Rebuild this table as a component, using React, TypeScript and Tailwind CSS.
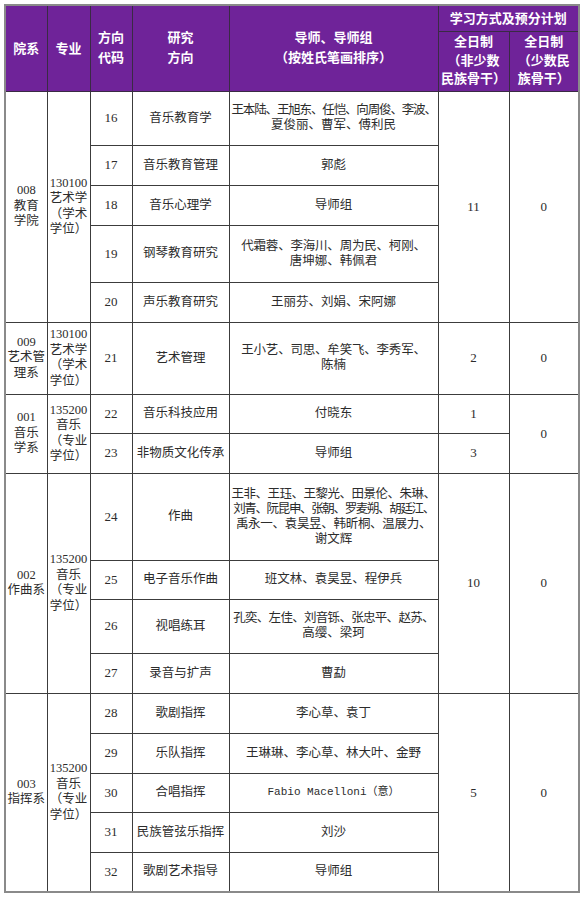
import React from "react";

type Line = { t: string; c?: string };
type Row = {
  code: string;
  dir: string;
  names: (string | Line)[];
  mono?: boolean;
  h: string;
};
type Group = {
  dept: string[];
  major: string[];
  rows: Row[];
  plan: { v: string; span: number }[];
  minority: { v: string; span: number }[];
};

const groups: Group[] = [
  {
    dept: ["008", "教育", "学院"],
    major: ["130100", "艺术学", "（学术", "学位）"],
    rows: [
      {
        code: "16",
        dir: "音乐教育学",
        names: [{ t: "王本陆、王旭东、任恺、向周俊、李波、", c: "tracking-[-1.15px]" }, "夏俊丽、曹军、傅利民"],
        h: "h-[54px]",
      },
      { code: "17", dir: "音乐教育管理", names: ["郭彪"], h: "h-[40px]" },
      { code: "18", dir: "音乐心理学", names: ["导师组"], h: "h-[40px]" },
      {
        code: "19",
        dir: "钢琴教育研究",
        names: [{ t: "代霜蓉、李海川、周为民、柯刚、", c: "tracking-[-0.2px]" }, "唐坤娜、韩佩君"],
        h: "h-[57px]",
      },
      { code: "20", dir: "声乐教育研究", names: ["王丽芬、刘娟、宋阿娜"], h: "h-[40px]" },
    ],
    plan: [{ v: "11", span: 5 }],
    minority: [{ v: "0", span: 5 }],
  },
  {
    dept: ["009", "艺术管", "理系"],
    major: ["130100", "艺术学", "（学术", "学位）"],
    rows: [
      {
        code: "21",
        dir: "艺术管理",
        names: [{ t: "王小艺、司思、牟笑飞、李秀军、", c: "tracking-[-0.2px]" }, "陈楠"],
        h: "h-[72px]",
      },
    ],
    plan: [{ v: "2", span: 1 }],
    minority: [{ v: "0", span: 1 }],
  },
  {
    dept: ["001", "音乐", "学系"],
    major: ["135200", "音乐", "（专业", "学位）"],
    rows: [
      { code: "22", dir: "音乐科技应用", names: ["付晓东"], h: "h-[39px]" },
      { code: "23", dir: "非物质文化传承", names: ["导师组"], h: "h-[40px]" },
    ],
    plan: [
      { v: "1", span: 1 },
      { v: "3", span: 1 },
    ],
    minority: [{ v: "0", span: 2 }],
  },
  {
    dept: ["002", "作曲系"],
    major: ["135200", "音乐", "（专业", "学位）"],
    rows: [
      {
        code: "24",
        dir: "作曲",
        names: [
          { t: "王非、王珏、王黎光、田景伦、朱琳、", c: "tracking-[-0.5px]" },
          { t: "刘青、阮昆申、张朝、罗麦朔、胡廷江、", c: "tracking-[-1.35px]" },
          { t: "禹永一、袁昊昱、韩昕桐、温展力、", c: "tracking-[-0.3px]" },
          "谢文辉",
        ],
        h: "h-[87px]",
      },
      { code: "25", dir: "电子音乐作曲", names: ["班文林、袁昊昱、程伊兵"], h: "h-[39px]" },
      {
        code: "26",
        dir: "视唱练耳",
        names: [{ t: "孔奕、左佳、刘音铄、张忠平、赵苏、", c: "tracking-[-0.7px]" }, "高缨、梁珂"],
        h: "h-[54px]",
      },
      { code: "27", dir: "录音与扩声", names: ["曹勐"], h: "h-[40px]" },
    ],
    plan: [{ v: "10", span: 4 }],
    minority: [{ v: "0", span: 4 }],
  },
  {
    dept: ["003", "指挥系"],
    major: ["135200", "音乐", "（专业", "学位）"],
    rows: [
      { code: "28", dir: "歌剧指挥", names: ["李心草、袁丁"], h: "h-[40px]" },
      { code: "29", dir: "乐队指挥", names: ["王琳琳、李心草、林大叶、金野"], h: "h-[40px]" },
      { code: "30", dir: "合唱指挥", names: ["Fabio Macelloni（意）"], mono: true, h: "h-[39px]" },
      { code: "31", dir: "民族管弦乐指挥", names: ["刘沙"], h: "h-[40px]" },
      { code: "32", dir: "歌剧艺术指导", names: ["导师组"], h: "h-[40px]" },
    ],
    plan: [{ v: "5", span: 5 }],
    minority: [{ v: "0", span: 5 }],
  },
];

const td = "border border-[#3c3c3c] p-0 text-center align-middle";
const th = "border border-[#3a2a44] p-0 text-center align-middle font-bold text-white text-[13px]";

function Lines({ lines, cls }: { lines: string[]; cls: string }) {
  return (
    <div className={cls}>
      {lines.map((l, i) => (
        <div key={i} className="whitespace-nowrap">
          {l}
        </div>
      ))}
    </div>
  );
}

export default function App() {
  return (
    <div className="bg-white w-[586px] h-[898px] pt-[4px] pl-[4px] font-['Liberation_Serif','Noto_Sans_CJK_SC',serif] text-[#2c2c2c]">
      <table className="table-fixed border-collapse w-[576px] border-2 border-[#8a8a8a]">
        <colgroup>
          <col className="w-[42px]" />
          <col className="w-[43px]" />
          <col className="w-[42px]" />
          <col className="w-[97px]" />
          <col className="w-[209px]" />
          <col className="w-[71px]" />
          <col className="w-[70px]" />
        </colgroup>
        <thead className="bg-[#6f2399]">
          <tr className="h-[26px]">
            <th rowSpan={2} className={th}>
              院系
            </th>
            <th rowSpan={2} className={th}>
              专业
            </th>
            <th rowSpan={2} className={th}>
              <Lines lines={["方向", "代码"]} cls="leading-[20px]" />
            </th>
            <th rowSpan={2} className={th}>
              <Lines lines={["研究", "方向"]} cls="leading-[20px]" />
            </th>
            <th rowSpan={2} className={th}>
              <Lines lines={["导师、导师组", "（按姓氏笔画排序）"]} cls="leading-[20px]" />
            </th>
            <th colSpan={2} className={th}>
              学习方式及预分计划
            </th>
          </tr>
          <tr className="h-[60px]">
            <th className={th}>
              <Lines lines={["全日制", "（非少数", "民族骨干）"]} cls="leading-[18.5px]" />
            </th>
            <th className={th}>
              <Lines lines={["全日制", "（少数民", "族骨干）"]} cls="leading-[18.5px]" />
            </th>
          </tr>
        </thead>
        <tbody className="text-[12.5px]">
          {groups.map((g, gi) => {
            let planIdx = 0;
            let planStart = 0;
            let minIdx = 0;
            let minStart = 0;
            return g.rows.map((r, ri) => {
              let planCell: React.ReactNode = null;
              if (planIdx < g.plan.length && ri === planStart) {
                const p = g.plan[planIdx];
                planCell = (
                  <td rowSpan={p.span} className={td + " text-[13px]"}>
                    {p.v}
                  </td>
                );
                planStart += p.span;
                planIdx++;
              }
              let minCell: React.ReactNode = null;
              if (minIdx < g.minority.length && ri === minStart) {
                const m = g.minority[minIdx];
                minCell = (
                  <td rowSpan={m.span} className={td + " text-[13px]"}>
                    {m.v}
                  </td>
                );
                minStart += m.span;
                minIdx++;
              }
              return (
                <tr key={gi + "-" + ri} className={r.h}>
                  {ri === 0 && (
                    <>
                      <td rowSpan={g.rows.length} className={td}>
                        <Lines lines={g.dept} cls="leading-[15.5px]" />
                      </td>
                      <td rowSpan={g.rows.length} className={td}>
                        <Lines lines={g.major} cls="leading-[15.5px]" />
                      </td>
                    </>
                  )}
                  <td className={td + " text-[13px]"}>{r.code}</td>
                  <td className={td}>{r.dir}</td>
                  <td className={td + " px-[2px]"}>
                    <div className={"leading-[15px]" + (r.mono ? " font-['Liberation_Mono','Noto_Sans_CJK_SC',monospace] text-[11px]" : "")}>
                      {r.names.map((n, i) => {
                        const line = typeof n === "string" ? { t: n } : n;
                        return (
                          <div key={i} className={"whitespace-nowrap " + (line.c ?? "")}>
                            {line.t}
                          </div>
                        );
                      })}
                    </div>
                  </td>
                  {planCell}
                  {minCell}
                </tr>
              );
            });
          })}
        </tbody>
      </table>
    </div>
  );
}
